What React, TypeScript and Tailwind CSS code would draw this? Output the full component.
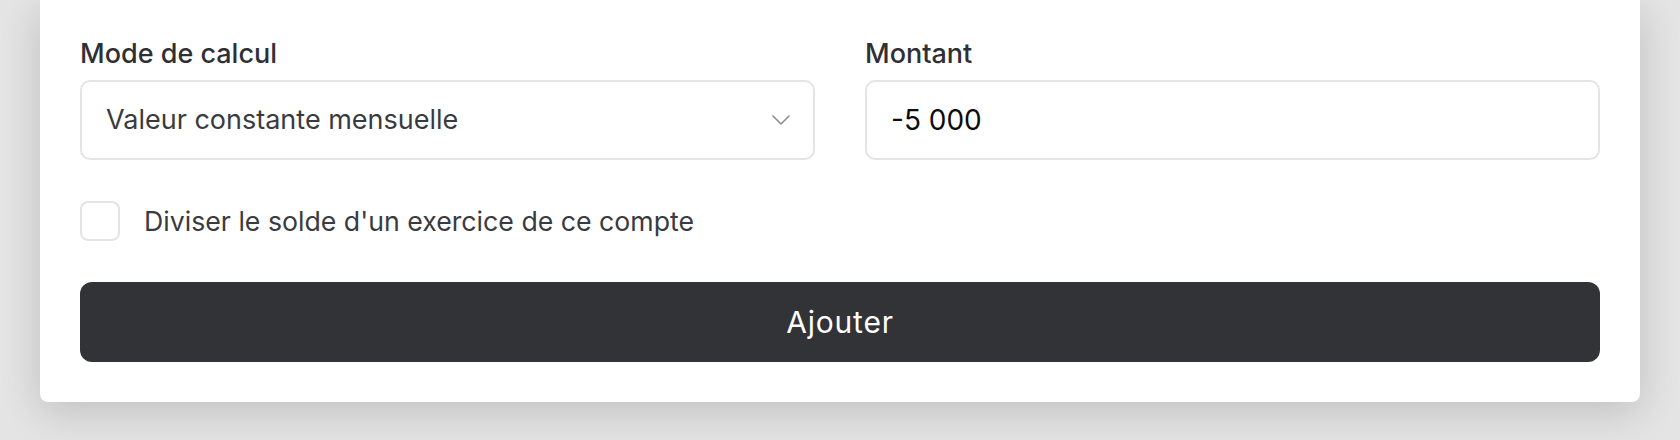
import React from "react";

export default function App() {
  return (
    <div
      className="w-[1680px] h-[440px] bg-[#e4e4e4] overflow-hidden"
      style={{ fontFamily: "Inter, 'Noto Sans', sans-serif" }}
    >
      <div className="ml-[40px] w-[1600px] bg-white rounded-b-[8px] shadow-[0_10px_40px_rgba(0,0,0,0.16)] px-[40px] pt-[36px] pb-[40px]">
        <div className="grid grid-cols-2 gap-x-[50px]">
          <div className="flex flex-col">
            <label className="text-[27px] leading-[36px] font-medium text-[#2f3035] mb-[8px]">
              Mode de calcul
            </label>
            <div className="h-[80px] border-2 border-[#e4e4e7] rounded-[10px] flex items-center justify-between pl-[24px] pr-[22px]">
              <span className="text-[27px] text-[#3a3b40]">Valeur constante mensuelle</span>
              <svg width="20" height="12" viewBox="0 0 20 12" fill="none">
                <polyline points="2,2 10,10 18,2" stroke="#8a8a8f" strokeWidth="1.6" strokeLinecap="round" strokeLinejoin="round" />
              </svg>
            </div>
          </div>
          <div className="flex flex-col">
            <label className="text-[27px] leading-[36px] font-medium text-[#2f3035] mb-[8px]">
              Montant
            </label>
            <div className="h-[80px] border-2 border-[#e4e4e7] rounded-[10px] flex items-center pl-[24px]">
              <span className="text-[28px] text-[#0c0c0e]">-5 000</span>
            </div>
          </div>
        </div>
        <div className="mt-[40px] h-[42px] flex items-center gap-[24px]">
          <div className="w-[40px] h-[40px] border-2 border-[#e4e4e7] rounded-[8px]" />
          <span className="text-[26.7px] text-[#3a3b40]">Diviser le solde d'un exercice de ce compte</span>
        </div>
        <button className="mt-[40px] w-full h-[80px] rounded-[12px] bg-[#323337] text-white text-[30px] tracking-[0.8px] font-normal flex items-center justify-center">
          Ajouter
        </button>
      </div>
    </div>
  );
}
